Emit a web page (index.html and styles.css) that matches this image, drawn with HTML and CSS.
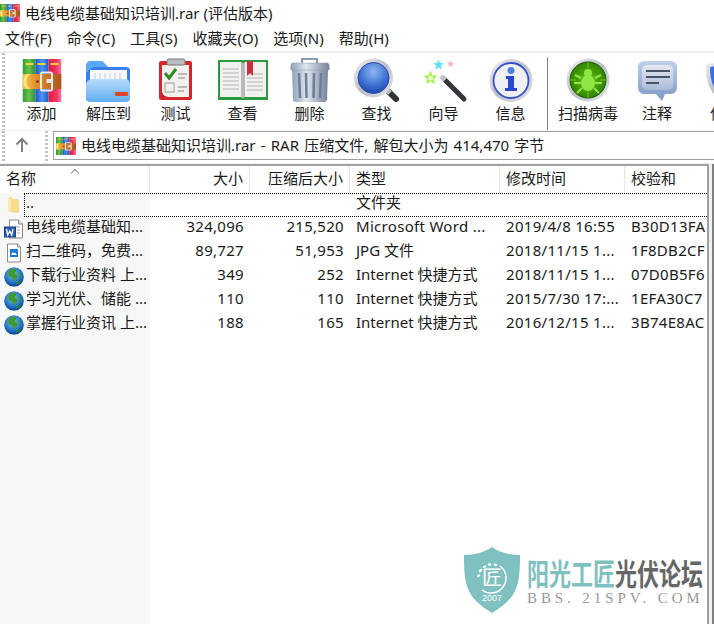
FILE: index.html
```html
<!DOCTYPE html>
<html lang="zh-CN">
<head>
    <meta charset="UTF-8">
    <meta name="viewport" content="width=device-width, initial-scale=1.0">
    <title>电线电缆基础知识培训.rar (评估版本)</title>
    <link rel="stylesheet" href="styles.css">
</head>
<body>
    <!-- shared gradients and icons -->
    <svg class="sprite" width="0" height="0">
        <defs>
            <linearGradient id="gGreen" x1="0" x2="1" y1="0" y2="0"><stop offset="0" stop-color="#2f9a3a"/><stop offset="0.5" stop-color="#6cc24a"/><stop offset="1" stop-color="#2f8f3a"/></linearGradient>
            <linearGradient id="gBlue" x1="0" x2="1" y1="0" y2="0"><stop offset="0" stop-color="#1f55c8"/><stop offset="0.5" stop-color="#4d94ee"/><stop offset="1" stop-color="#1f5ad0"/></linearGradient>
            <linearGradient id="gRed" x1="0" x2="1" y1="0" y2="0"><stop offset="0" stop-color="#d81d3c"/><stop offset="0.6" stop-color="#f2365f"/><stop offset="1" stop-color="#f27a9a"/></linearGradient>
            <linearGradient id="gBelt" x1="0" x2="1" y1="0" y2="0"><stop offset="0" stop-color="#f4c94a"/><stop offset="0.35" stop-color="#e2902c"/><stop offset="1" stop-color="#a8561a"/></linearGradient>
            <linearGradient id="gFolder" x1="0" x2="0" y1="0" y2="1"><stop offset="0" stop-color="#b6dcfb"/><stop offset="1" stop-color="#62aef5"/></linearGradient>
            <linearGradient id="gTrash" x1="0" x2="1" y1="0" y2="0"><stop offset="0" stop-color="#8fa0b8"/><stop offset="0.4" stop-color="#dfe6ef"/><stop offset="1" stop-color="#73839c"/></linearGradient>
            <linearGradient id="gSilver" x1="0" x2="1" y1="0" y2="1"><stop offset="0" stop-color="#f2f2f2"/><stop offset="0.5" stop-color="#b9bec6"/><stop offset="1" stop-color="#e8e8e8"/></linearGradient>
            <radialGradient id="gLens" cx="0.5" cy="0.3" r="0.75"><stop offset="0" stop-color="#8fb6f2"/><stop offset="0.6" stop-color="#3d6fd2"/><stop offset="1" stop-color="#1c3fa8"/></radialGradient>
            <radialGradient id="gBug" cx="0.5" cy="0.5" r="0.55"><stop offset="0" stop-color="#62c414"/><stop offset="1" stop-color="#2c7d02"/></radialGradient>
            <linearGradient id="gBubble" x1="0" x2="0" y1="0" y2="1"><stop offset="0" stop-color="#bdd0ec"/><stop offset="1" stop-color="#7d98c6"/></linearGradient>
            <linearGradient id="gBubbleIn" x1="0" x2="0" y1="0" y2="1"><stop offset="0" stop-color="#e6e9f0"/><stop offset="1" stop-color="#a9bad6"/></linearGradient>
            <radialGradient id="gGlobe" cx="0.45" cy="0.35" r="0.7"><stop offset="0" stop-color="#7cc0ee"/><stop offset="0.65" stop-color="#1d6fc0"/><stop offset="1" stop-color="#0c3a80"/></radialGradient>

            <symbol id="iconRar" viewBox="0 0 39 43" preserveAspectRatio="none">
                <rect x="0" y="0" width="13" height="43" fill="url(#gGreen)"/>
                <rect x="13" y="0" width="13" height="43" fill="url(#gBlue)"/>
                <rect x="26" y="0" width="13" height="43" rx="1" fill="url(#gRed)"/>
                <rect x="3" y="4" width="8" height="2" fill="#f2d23c"/>
                <rect x="15" y="4" width="8" height="2" fill="#f2d23c"/>
                <rect x="28" y="4" width="8" height="2" fill="#f2d23c"/>
                <rect x="0" y="15" width="39" height="15" fill="url(#gBelt)"/>
                <path d="M6 15a5 7.500 0 0 0 0 15h3a5 7.500 0 0 1 0-15z" fill="#fbe48a"/>
                <rect x="18.500" y="13.500" width="11" height="18" rx="1.500" fill="none" stroke="#e9e9ee" stroke-width="2"/>
                <rect x="24" y="20" width="5" height="4" fill="#e9e9ee"/>
                <circle cx="15" cy="22.500" r="1.200" fill="#5a2e0c"/>
            </symbol>

            <symbol id="iconGlobe" viewBox="0 0 20 20">
                <circle cx="10" cy="10" r="9.800" fill="url(#gGlobe)"/>
                <path d="M6 2.500c2-1 4.500-1 6 0 1 1.500-1 2-1 3.500s2 1.500 2.500 3-2 3-2.500 5c-1.500 0-1.500-2.500-3-3.500S4.500 9 4 7.500 5 4 6 2.500z" fill="#3f9a2e"/>
                <path d="M14 5c1.500.5 3 2 3.500 4-1 .5-2.500-.5-3-1.500S13.500 6 14 5z" fill="#3f9a2e"/>
                <path d="M12 15.500c1-1 3-2 4-2-.5 2-2 3.500-3.500 4-.5-.5-.5-1.300-.5-2z" fill="#2f8a2a"/>
            </symbol>
        </defs>
    </svg>

    <header class="titlebar">
        <svg class="title-icon" width="20" height="18"><use href="#iconRar"/></svg>
        <span>电线电缆基础知识培训.rar (评估版本)</span>
    </header>

    <nav class="menubar">
        <span>文件(F)</span>
        <span>命令(C)</span>
        <span>工具(S)</span>
        <span>收藏夹(O)</span>
        <span>选项(N)</span>
        <span>帮助(H)</span>
    </nav>

    <div class="toolbar">
        <div class="grip"></div>
        <div class="tools">
            <div class="tool">
                <svg width="48" height="48" viewBox="0 0 48 48"><use href="#iconRar" x="4.500" y="3" width="39" height="43"/></svg>
                <span>添加</span>
            </div>
            <div class="tool">
                <svg width="48" height="48" viewBox="0 0 48 48">
                    <path d="M1 10a5 5 0 0 1 5-5h11l6 6h18a4 4 0 0 1 4 4v26a4 4 0 0 1-4 4H5a4 4 0 0 1-4-4z" fill="#3a7ff0"/>
                    <path d="M1 10a5 5 0 0 1 5-5h11l6 6H8l-7 6z" fill="#5aa8f8"/>
                    <rect x="5" y="14" width="37" height="12" fill="#f6f8fb"/>
                    <path d="M10 17v6M15 17v6M20 17v6M25 17v6M30 17v6M35 17v6" stroke="#c6ccd6"/>
                    <path d="M1 30c0-5 3-7 7-7h31c4 0 6 2 6 6v13a4 4 0 0 1-4 4H5a4 4 0 0 1-4-4z" fill="url(#gFolder)"/>
                    <rect x="30" y="36" width="13" height="4" rx="1" fill="#e2412a"/>
                </svg>
                <span>解压到</span>
            </div>
            <div class="tool">
                <svg width="48" height="48" viewBox="0 0 48 48">
                    <rect x="7" y="5" width="33" height="39" rx="2" fill="#d4252c"/>
                    <path d="M10 9h27v32H16c-4 0-6-2-6-5z" fill="#f3f1ec"/>
                    <path d="M10 36c1 4 4 5 8 5H10z" fill="#b01c22"/>
                    <rect x="15" y="3" width="18" height="6" rx="1.500" fill="#b9bcc0" stroke="#777"/>
                    <path d="M13 17l4 5 7-9" fill="none" stroke="#2e8a2a" stroke-width="3"/>
                    <path d="M26 18h9M26 22h7M26 31h9M26 35h6" stroke="#a8a8a8" stroke-width="1.500"/>
                    <rect x="13" y="27" width="9" height="9" fill="#f3f1ec" stroke="#999"/>
                </svg>
                <span>测试</span>
            </div>
            <div class="tool">
                <svg width="52" height="48" viewBox="0 0 52 48">
                    <rect x="1" y="4" width="50" height="40" fill="#2c9a3c"/>
                    <path d="M3 6h21l2 2 2-2h21v35H28l-2 1-2-1H3z" fill="#f1f1ee"/>
                    <path d="M24 6l2 2v34l-2-1zM28 6l-2 2v34l2-1z" fill="#b9b9b9"/>
                    <path d="M6 13h16M6 17h16M6 21h16M6 25h16M6 29h16M6 33h16M30 18h16M30 22h16M30 26h16M30 30h16M30 34h16" stroke="#c8c8c8" stroke-width="1.500"/>
                    <path d="M30 5h6v15l-3-3-3 3z" fill="#c92f3e"/>
                </svg>
                <span>查看</span>
            </div>
            <div class="tool">
                <svg width="48" height="48" viewBox="0 0 48 48">
                    <path d="M16 7V3h15v4" fill="none" stroke="#8d9bb0" stroke-width="2"/>
                    <path d="M7 44l-1-31h36l-1 31a3 3 0 0 1-3 2H10a3 3 0 0 1-3-2z" fill="url(#gTrash)"/>
                    <path d="M13 17l1 25M20 17l.5 25M28 17l-.5 25M35 17l-1 25" stroke="#6c7d98" stroke-width="2.500"/>
                    <path d="M5 14c-1-2 0-6 1-7h36c1 1 2 5 1 7z" fill="url(#gTrash)" stroke="#8a97a8" stroke-width=".5"/>
                </svg>
                <span>删除</span>
            </div>
            <div class="tool">
                <svg width="48" height="48" viewBox="0 0 48 48">
                    <path d="M34 34l9 9" stroke="#2e3338" stroke-width="6" stroke-linecap="round"/>
                    <path d="M33 33l4 4" stroke="#bbb" stroke-width="5"/>
                    <circle cx="20.500" cy="22" r="19.500" fill="url(#gSilver)"/>
                    <circle cx="20.500" cy="22" r="15.500" fill="url(#gLens)" stroke="#2a4ea8"/>
                </svg>
                <span>查找</span>
            </div>
            <div class="tool">
                <svg width="48" height="48" viewBox="0 0 48 48">
                    <path d="M24 23l20 20" stroke="#33363a" stroke-width="5" stroke-linecap="round"/>
                    <path d="M21 20l4 4" stroke="#c4c4c4" stroke-width="5"/>
                    <polygon transform="translate(10.500 22) scale(.75)" points="0,-10 2.600,-3.600 9.500,-3.100 4.300,1.400 5.900,8.100 0,4.500 -5.900,8.100 -4.300,1.400 -9.500,-3.100 -2.600,-3.600" fill="#a6f04a"/>
                    <circle cx="10.500" cy="22" r="2.500" fill="#eaffc8"/>
                    <polygon transform="translate(18.500 9) scale(.55)" points="0,-10 2.600,-3.600 9.500,-3.100 4.300,1.400 5.900,8.100 0,4.500 -5.900,8.100 -4.300,1.400 -9.500,-3.100 -2.600,-3.600" fill="#5fe0f8"/>
                    <polygon transform="translate(30.500 8) scale(.38)" points="0,-10 2.600,-3.600 9.500,-3.100 4.300,1.400 5.900,8.100 0,4.500 -5.900,8.100 -4.300,1.400 -9.500,-3.100 -2.600,-3.600" fill="#f8b4bc"/>
                </svg>
                <span>向导</span>
            </div>
            <div class="tool">
                <svg width="48" height="48" viewBox="0 0 48 48">
                    <circle cx="24" cy="24.500" r="21.500" fill="url(#gSilver)"/>
                    <circle cx="24" cy="24.500" r="17.500" fill="#eef0f4" stroke="#3554c8" stroke-width="1.800"/>
                    <circle cx="24" cy="14.500" r="3.500" fill="#4f80e0"/>
                    <path d="M19 20h8v12h3v3H18v-3h3v-9h-2z" fill="#2848d0"/>
                </svg>
                <span>信息</span>
            </div>
            <div class="tool-sep"></div>
            <div class="tool tool-scan">
                <svg width="48" height="48" viewBox="0 0 48 48">
                    <circle cx="24" cy="24" r="21.500" fill="url(#gSilver)"/>
                    <circle cx="24" cy="24" r="18" fill="url(#gBug)" stroke="#1d5200"/>
                    <path d="M24 6v6M24 36v6M6 24h6M36 24h6" stroke="#6ec81e"/>
                    <ellipse cx="24" cy="27" rx="7" ry="8" fill="#90e640"/>
                    <circle cx="24" cy="17" r="4" fill="#90e640"/>
                    <path d="M17 22l-6-3M17 27h-7M18 32l-5 5M31 22l6-3M31 27h7M30 32l5 5" stroke="#90e640" stroke-width="2"/>
                </svg>
                <span>扫描病毒</span>
            </div>
            <div class="tool tool-note">
                <svg width="48" height="48" viewBox="0 0 48 48">
                    <path d="M11 5h27a6 6 0 0 1 6 6v21a6 6 0 0 1-6 6h-6l-3 7-6-7H11a6 6 0 0 1-6-6V11a6 6 0 0 1 6-6z" fill="url(#gBubble)"/>
                    <rect x="9" y="9" width="31" height="25" rx="5" fill="url(#gBubbleIn)"/>
                    <path d="M13 15h24M13 21h24M13 27h13" stroke="#4a5464" stroke-width="2"/>
                </svg>
                <span>注释</span>
            </div>
            <div class="tool tool-protect">
                <svg width="48" height="48" viewBox="0 0 48 48">
                    <path d="M24 3c5 3 12 5 19 5 1 18-4 31-19 38C9 39 4 26 5 8c7 0 14-2 19-5z" fill="url(#gSilver)"/>
                    <path d="M24 7c5 2 10 4 15 4 0 15-4 25-15 31C13 36 9 26 9 11c5 0 10-2 15-4z" fill="#3a6fe0"/>
                </svg>
                <span>保护</span>
            </div>
        </div>
    </div>

    <div class="addressbar">
        <div class="grip"></div>
        <svg class="up-arrow" width="16" height="16" viewBox="0 0 16 16">
            <path d="M8 15V2M2.500 7.500L8 2l5.500 5.500" fill="none" stroke="#808080" stroke-width="2"/>
        </svg>
        <div class="grip grip-second"></div>
        <div class="address-field">
            <svg width="20" height="18"><use href="#iconRar"/></svg>
            <span>电线电缆基础知识培训.rar - RAR 压缩文件, 解包大小为 414,470 字节</span>
        </div>
    </div>

    <div class="list-wrap">
        <main class="filelist">
            <div class="row row-head">
                <div class="col col-name">名称<span class="sort-caret"></span></div>
                <div class="col col-num">大小</div>
                <div class="col col-num">压缩后大小</div>
                <div class="col">类型</div>
                <div class="col">修改时间</div>
                <div class="col">校验和</div>
            </div>
            <div class="rows">
                <div class="row row-up">
                    <div class="col col-name">
                        <svg class="file-icon" width="20" height="20" viewBox="0 0 20 20">
                            <path d="M7 2c-2 0-3 1-3 2v11c0 1 1 2 3 2 3 1 6 1 8 .5V6c0-1-1-2-2-2H9C8.500 3 8 2 7 2z" fill="#f7dc8a"/>
                            <path d="M4 4c1-1 3-1 3 0v13c-2 0-3-1-3-2z" fill="#fbe9b4"/>
                        </svg>
                        <span>..</span>
                    </div>
                    <div class="col"></div>
                    <div class="col"></div>
                    <div class="col">文件夹</div>
                    <div class="col"></div>
                    <div class="col"></div>
                </div>
                <div class="row">
                    <div class="col col-name">
                        <svg class="file-icon" width="20" height="20" viewBox="0 0 20 20">
                            <path d="M5.500 1h9l4 4v14h-13z" fill="#fff" stroke="#8a8a8a"/>
                            <path d="M14.500 1v4h4" fill="#e4e4e4" stroke="#8a8a8a"/>
                            <path d="M11 8h5M13 11h3M13 14h3" stroke="#a8a8a8"/>
                            <rect x="0.500" y="8" width="11" height="10" fill="#2a5cb0" stroke="#1c3f80"/>
                            <path d="M2.500 10l1.200 6 2-4 2 4 1.300-6" fill="none" stroke="#fff" stroke-width="1.300"/>
                        </svg>
                        <span>电线电缆基础知...</span>
                    </div>
                    <div class="col col-num">324,096</div>
                    <div class="col col-num">215,520</div>
                    <div class="col col-latin">Microsoft Word ...</div>
                    <div class="col col-latin">2019/4/8 16:55</div>
                    <div class="col col-latin">B30D13FA</div>
                </div>
                <div class="row">
                    <div class="col col-name">
                        <svg class="file-icon" width="20" height="20" viewBox="0 0 20 20">
                            <path d="M3.500 1h10l3 3v15h-13z" fill="#fff" stroke="#8a8a8a"/>
                            <path d="M13.500 1v3h3" fill="#e4e4e4" stroke="#8a8a8a"/>
                            <rect x="6" y="6" width="8" height="8" fill="#1f78d0"/>
                            <path d="M7 12l2-3 1 1.500 1-1 2 2.500z" fill="#fff"/>
                        </svg>
                        <span>扫二维码，免费...</span>
                    </div>
                    <div class="col col-num">89,727</div>
                    <div class="col col-num">51,953</div>
                    <div class="col">JPG 文件</div>
                    <div class="col col-latin">2018/11/15 1...</div>
                    <div class="col col-latin">1F8DB2CF</div>
                </div>
                <div class="row">
                    <div class="col col-name">
                        <svg class="file-icon" width="20" height="20"><use href="#iconGlobe"/></svg>
                        <span>下载行业资料 上...</span>
                    </div>
                    <div class="col col-num">349</div>
                    <div class="col col-num">252</div>
                    <div class="col">Internet 快捷方式</div>
                    <div class="col col-latin">2018/11/15 1...</div>
                    <div class="col col-latin">07D0B5F6</div>
                </div>
                <div class="row">
                    <div class="col col-name">
                        <svg class="file-icon" width="20" height="20"><use href="#iconGlobe"/></svg>
                        <span>学习光伏、储能 ...</span>
                    </div>
                    <div class="col col-num">110</div>
                    <div class="col col-num">110</div>
                    <div class="col">Internet 快捷方式</div>
                    <div class="col col-latin">2015/7/30 17:...</div>
                    <div class="col col-latin">1EFA30C7</div>
                </div>
                <div class="row">
                    <div class="col col-name">
                        <svg class="file-icon" width="20" height="20"><use href="#iconGlobe"/></svg>
                        <span>掌握行业资讯 上...</span>
                    </div>
                    <div class="col col-num">188</div>
                    <div class="col col-num">165</div>
                    <div class="col">Internet 快捷方式</div>
                    <div class="col col-latin">2016/12/15 1...</div>
                    <div class="col col-latin">3B74E8AC</div>
                </div>
            </div>
        </main>
        <div class="list-gutter"></div>
    </div>

    <aside class="watermark">
        <svg width="58" height="68" viewBox="0 0 58 68">
            <path d="M29 1c7 5 17 8 28 8 0 8 0 22-3 31-4 13-14 20-25 27C18 60 8 53 4 40 1 31 1 17 1 9c11 0 21-3 28-8z" fill="#7fc1c1"/>
            <path d="M37 20a15 15 0 0 1-18 24" fill="none" stroke="#fff" stroke-width="1.500"/>
            <path d="M15 30l1-.5M17 25l1-1M21 21l1-.5M26 18.500h1M32 18.500l1 .5" stroke="#fff" stroke-width="2.500" stroke-linecap="round"/>
            <text x="29" y="39" class="wm-seal">匠</text>
            <text x="29" y="55" class="wm-year">2007</text>
        </svg>
        <div class="wm-text">
            <div class="wm-title"><span class="wm-teal">阳光工匠</span>光伏论坛</div>
            <div class="wm-url">BBS. 21SPV. COM</div>
        </div>
    </aside>
</body>
</html>
```

FILE: styles.css
```css
html, body {
    margin: 0;
    height: 100%;
}
body {
    position: relative;
    width: 714px;
    height: 624px;
    overflow: hidden;
    display: flex;
    flex-direction: column;
    background: #fff;
    color: #1a1a1a;
    font-family: "Noto Sans", "Noto Sans CJK SC", sans-serif;
    font-size: 15px;
}
.sprite {
    display: block;
}
svg {
    overflow: visible;
    flex: none;
}

.titlebar {
    height: 26px;
    display: flex;
    align-items: center;
    gap: 5px;
    white-space: nowrap;
}
.titlebar span {
    margin-bottom: 2px;
}

.menubar {
    height: 25px;
    display: flex;
    align-items: center;
    gap: 15px;
    padding: 0 0 3px 5px;
    box-sizing: border-box;
    white-space: nowrap;
}

.toolbar {
    height: 77px;
    display: flex;
    border-top: 2px solid #f0f0f0;
}
.grip {
    flex: none;
    width: 3px;
    margin-left: 2px;
    background: repeating-linear-gradient(to bottom, #c4c4c4 0 2px, transparent 2px 4px);
}
.tools {
    flex: none;
    display: flex;
    padding-left: 3px;
}
.tool {
    flex: none;
    width: 67px;
    display: flex;
    flex-direction: column;
    align-items: center;
    padding-top: 3px;
    white-space: nowrap;
}
.tool span {
    line-height: 20px;
    margin-top: -1px;
}
.tool-sep {
    flex: none;
    width: 1px;
    margin: 4px 0 0 3px;
    background: #808080;
}
.tool-scan {
    width: 80px;
}
.tool-note {
    width: 58px;
}
.tool-protect {
    width: 78px;
}

.addressbar {
    height: 32px;
    display: flex;
    align-items: stretch;
    border-top: 1px solid #f0f0f0;
    border-bottom: 1px solid #f0f0f0;
}
.up-arrow {
    margin: 6px 13px 0 9px;
}
.grip-second {
    margin-left: 2px;
}
.address-field {
    flex: 1;
    display: flex;
    align-items: center;
    gap: 5px;
    margin: 0 0 3px 5px;
    padding-left: 2px;
    border: solid #a0a0a0;
    border-width: 1px 0 1px 1px;
    white-space: nowrap;
    word-spacing: 1.3px;
}
.address-field span {
    margin-bottom: 3px;
}

.list-wrap {
    flex: 1;
    display: flex;
}
.filelist {
    width: 707px;
    display: flex;
    flex-direction: column;
    border-top: 2px solid #a0a0a0;
    border-right: 2px solid #a0a0a0;
}
.list-gutter {
    flex: 1;
    background: #f0f0f0;
    border-right: 2px solid #808080;
}
.row {
    position: relative;
    height: 24px;
    display: grid;
    grid-template-columns: 150px 100px 100px 150px 125px 82px;
    align-items: center;
    white-space: nowrap;
}
.col {
    padding: 0 0 6px 6px;
    line-height: 18px;
    overflow: hidden;
}
.col-latin {
    letter-spacing: 0.3px;
}
.col-name {
    display: flex;
    align-items: center;
    gap: 2px;
    padding: 0 0 0 4px;
    overflow: visible;
}
.col-name span {
    margin-bottom: 6px;
}
.col-num {
    padding: 0 6px 6px 0;
    text-align: right;
    letter-spacing: 0.3px;
}
.row-head {
    height: 27px;
}
.row-head .col {
    height: 27px;
    line-height: 24px;
    padding-bottom: 3px;
    border-right: 1px solid #e5e5e5;
    box-sizing: border-box;
    letter-spacing: 0;
}
.row-head .col:last-child {
    border-right: 0;
}
.row-head .col-name {
    padding-left: 6px;
}
.sort-caret {
    position: absolute;
    left: 72px;
    top: 4px;
    width: 5px;
    height: 5px;
    border: solid #8c8c8c;
    border-width: 1px 0 0 1px;
    transform: rotate(45deg);
}
.rows {
    flex: 1;
    background: linear-gradient(to right, #f7f7f7 150px, #fff 150px);
}
.row-up::after {
    content: "";
    position: absolute;
    left: 24px;
    right: 0;
    top: 0;
    bottom: 0;
    border: dotted #000;
    border-width: 1px 0 1px 1px;
}
.file-icon {
    display: block;
}

.watermark {
    position: absolute;
    left: 463px;
    top: 546px;
    display: flex;
    gap: 6px;
}
.wm-seal {
    font-size: 20px;
    fill: #fff;
    text-anchor: middle;
}
.wm-year {
    font-family: "Liberation Sans", sans-serif;
    font-size: 9px;
    fill: #fff;
    text-anchor: middle;
}
.wm-text {
    padding-top: 14px;
}
.wm-title {
    font-size: 22px;
    font-weight: 700;
    line-height: 26px;
    color: #666;
    white-space: nowrap;
    transform: scaleY(1.35);
    transform-origin: center;
}
.wm-teal {
    color: #7fc1c1;
}
.wm-url {
    margin-top: 5px;
    font-family: "Liberation Serif", serif;
    font-size: 15px;
    line-height: 14px;
    letter-spacing: 3.9px;
    color: #999;
    white-space: nowrap;
}
```
